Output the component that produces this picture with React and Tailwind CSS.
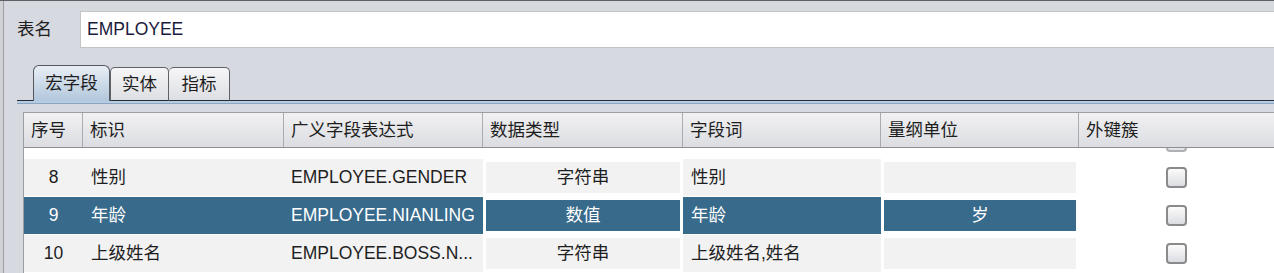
import React from "react";

const CJK = { fontFamily: '"Liberation Sans", "Noto Sans CJK SC", sans-serif' };

function Checkbox() {
  return (
    <div className="w-[21px] h-[21px] rounded-[4px] border-2 border-[#8a8a8a] bg-gradient-to-b from-[#fbfbfb] to-[#dcdde2]" />
  );
}

const rows = [
  { n: "8", id: "性别", expr: "EMPLOYEE.GENDER", type: "字符串", word: "性别", unit: "", sel: false },
  { n: "9", id: "年龄", expr: "EMPLOYEE.NIANLING", type: "数值", word: "年龄", unit: "岁", sel: true },
  { n: "10", id: "上级姓名", expr: "EMPLOYEE.BOSS.N...", type: "字符串", word: "上级姓名,姓名", unit: "", sel: false },
];

const cols = "grid grid-cols-[59px_201px_199px_200px_198px_198px_1fr]";

export default function App() {
  return (
    <div
      className="w-[1274px] h-[273px] overflow-hidden bg-[#d6d9df] border-t border-[#5e6066] flex text-[#1e1e1e]"
      style={CJK}
    >
      <div className="w-[4px] bg-[#d0d2d6] border-r border-[#9c9ea3] shrink-0" />
      <div className="flex-1 flex flex-col pl-[13px]">
        {/* table name row */}
        <div className="flex items-center mt-[10px] h-[37px]">
          <div className="w-[63px] text-[17.5px]">表名</div>
          <div className="flex-1 h-[37px] bg-white border border-[#c4c4c4] border-r-0 flex items-center pl-[6px] text-[17.5px] text-[#1a1a3c]">
            EMPLOYEE
          </div>
        </div>

        {/* tabs */}
        <div className="flex items-end mt-[17px] h-[36px]">
          <div className="w-[16px] h-full border-b border-[#262c36]" />
          <div className="w-[77px] h-[36px] rounded-t-[6px] border border-b-0 border-[#55585e] bg-gradient-to-b from-[#e9eef4] to-[#b1c7dc] flex items-center justify-center text-[17.5px]">
            宏字段
          </div>
          <div className="w-[59px] h-[34px] rounded-t-[5px] border border-[#5f6166] border-b-[#262c36] bg-gradient-to-b from-[#f6f6f7] to-[#dedfe3] flex items-center justify-center text-[17.5px]">
            实体
          </div>
          <div className="w-[61px] h-[34px] rounded-t-[5px] border border-l-0 border-[#5f6166] border-b-[#262c36] bg-gradient-to-b from-[#f6f6f7] to-[#dedfe3] flex items-center justify-center text-[17.5px]">
            指标
          </div>
          <div className="flex-1 h-full border-b border-[#262c36]" />
        </div>
        <div className="h-[4px] bg-[#b5cde4] border-b border-[#8ea6bd]" />

        {/* table */}
        <div className="ml-[6px] mt-[8px] border-l border-t border-[#9c9ea3] bg-white flex-1">
          <div className={`${cols} h-[35px] bg-gradient-to-b from-[#f1f1f3] to-[#dcdde1] border-b border-[#8d8f94] text-[17.5px]`}>
            {["序号", "标识", "广义字段表达式", "数据类型", "字段词", "量纲单位", "外键簇"].map((h, i) => (
              <div
                key={h}
                className={`flex items-center pl-[7px] ${i < 6 ? "border-r border-[#a9abb0]" : ""}`}
              >
                {h}
              </div>
            ))}
          </div>
          {/* partial row above */}
          <div className={`${cols} h-[11px]`}>
            <div /><div /><div /><div /><div /><div />
            <div className="flex justify-center overflow-hidden">
              <div className="w-[21px] h-[4px] border-b-2 border-x-2 border-[#b0b0b4] rounded-b-[4px] bg-[#e3e4e8]" />
            </div>
          </div>
          {rows.map((r) => {
            const full = r.sel ? "bg-[#386a8b] text-white" : "bg-[#f2f2f2] text-[#1e1e1e]";
            return (
              <div key={r.n} className={`${cols} h-[37px] mb-[1px]`}>
                <div className={`${full} flex items-center justify-center text-[17.5px]`}>{r.n}</div>
                <div className={`${full} flex items-center pl-[8px] text-[17.5px]`}>{r.id}</div>
                <div className={`${full} flex items-center pl-[7px] text-[17.5px] whitespace-nowrap`}>{r.expr}</div>
                <div className="p-[3px]">
                  <div className={`${full} h-full flex items-center justify-center text-[17.5px]`}>{r.type}</div>
                </div>
                <div className={`${full} flex items-center pl-[8px] text-[17.5px] whitespace-nowrap`}>{r.word}</div>
                <div className="p-[3px]">
                  <div className={`${full} h-full flex items-center justify-center text-[17.5px]`}>{r.unit}</div>
                </div>
                <div className="flex items-center justify-center pr-[1px]">
                  <Checkbox />
                </div>
              </div>
            );
          })}
        </div>
      </div>
    </div>
  );
}
